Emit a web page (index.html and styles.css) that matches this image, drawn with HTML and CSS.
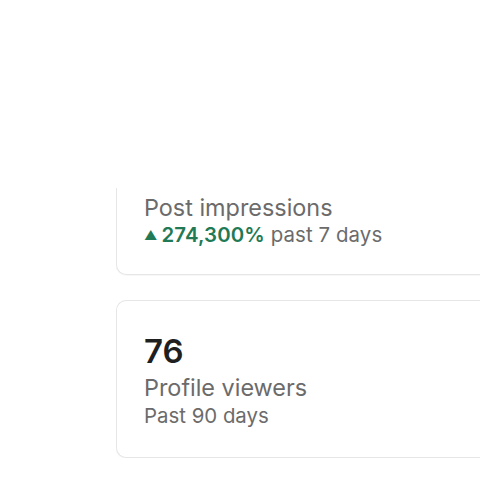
FILE: index.html
```html
<!DOCTYPE html>
<html lang="en">
<head>
<meta charset="utf-8">
<link rel="stylesheet" href="styles.css">
</head>
<body>
<main class="column">
  <section class="card card--cut">
    <p class="label">Post impressions</p>
    <p class="sub"><span class="trend"><span class="arrow">▲</span>274,300%</span> past 7 days</p>
  </section>
  <section class="card">
    <p class="value">76</p>
    <p class="label">Profile viewers</p>
    <p class="sub">Past 90 days</p>
  </section>
</main>
</body>
</html>
```
FILE: styles.css
```css
html, body {
  margin: 0;
  padding: 0;
  background: #ffffff;
}
body {
  font-family: Inter, "Liberation Sans", sans-serif;
  color: #191919;
}
.column {
  display: flex;
  flex-direction: column;
  gap: 25px;
  padding: 188px 0 0 116px;
}
.card {
  background: #fff;
  border: 1px solid #e6e6e6;
  border-right: none;
  border-radius: 10px 0 0 10px;
  padding: 29px 0 27px 27px;
  box-shadow: 0 1px 1px rgba(0,0,0,0.03);
}
.card--cut {
  border-top: none;
  border-radius: 0 0 0 10px;
  padding-top: 5px;
  padding-bottom: 26px;
}
p { margin: 0; }
.value {
  font-size: 33px;
  line-height: 43px;
  font-weight: 600;
  color: #1f1f1f;
}
.label {
  font-size: 23.4px;
  line-height: 29px;
  color: #6b6b6b;
}
.sub {
  font-size: 20.4px;
  line-height: 28px;
  color: #6b6b6b;
}
.card--cut .sub {
  line-height: 26px;
  letter-spacing: 0.1px;
}
.trend {
  color: #1f7a55;
  font-weight: 600;
}
.arrow {
  font-size: 13px;
  vertical-align: 2px;
  margin-right: 4px;
}
```
